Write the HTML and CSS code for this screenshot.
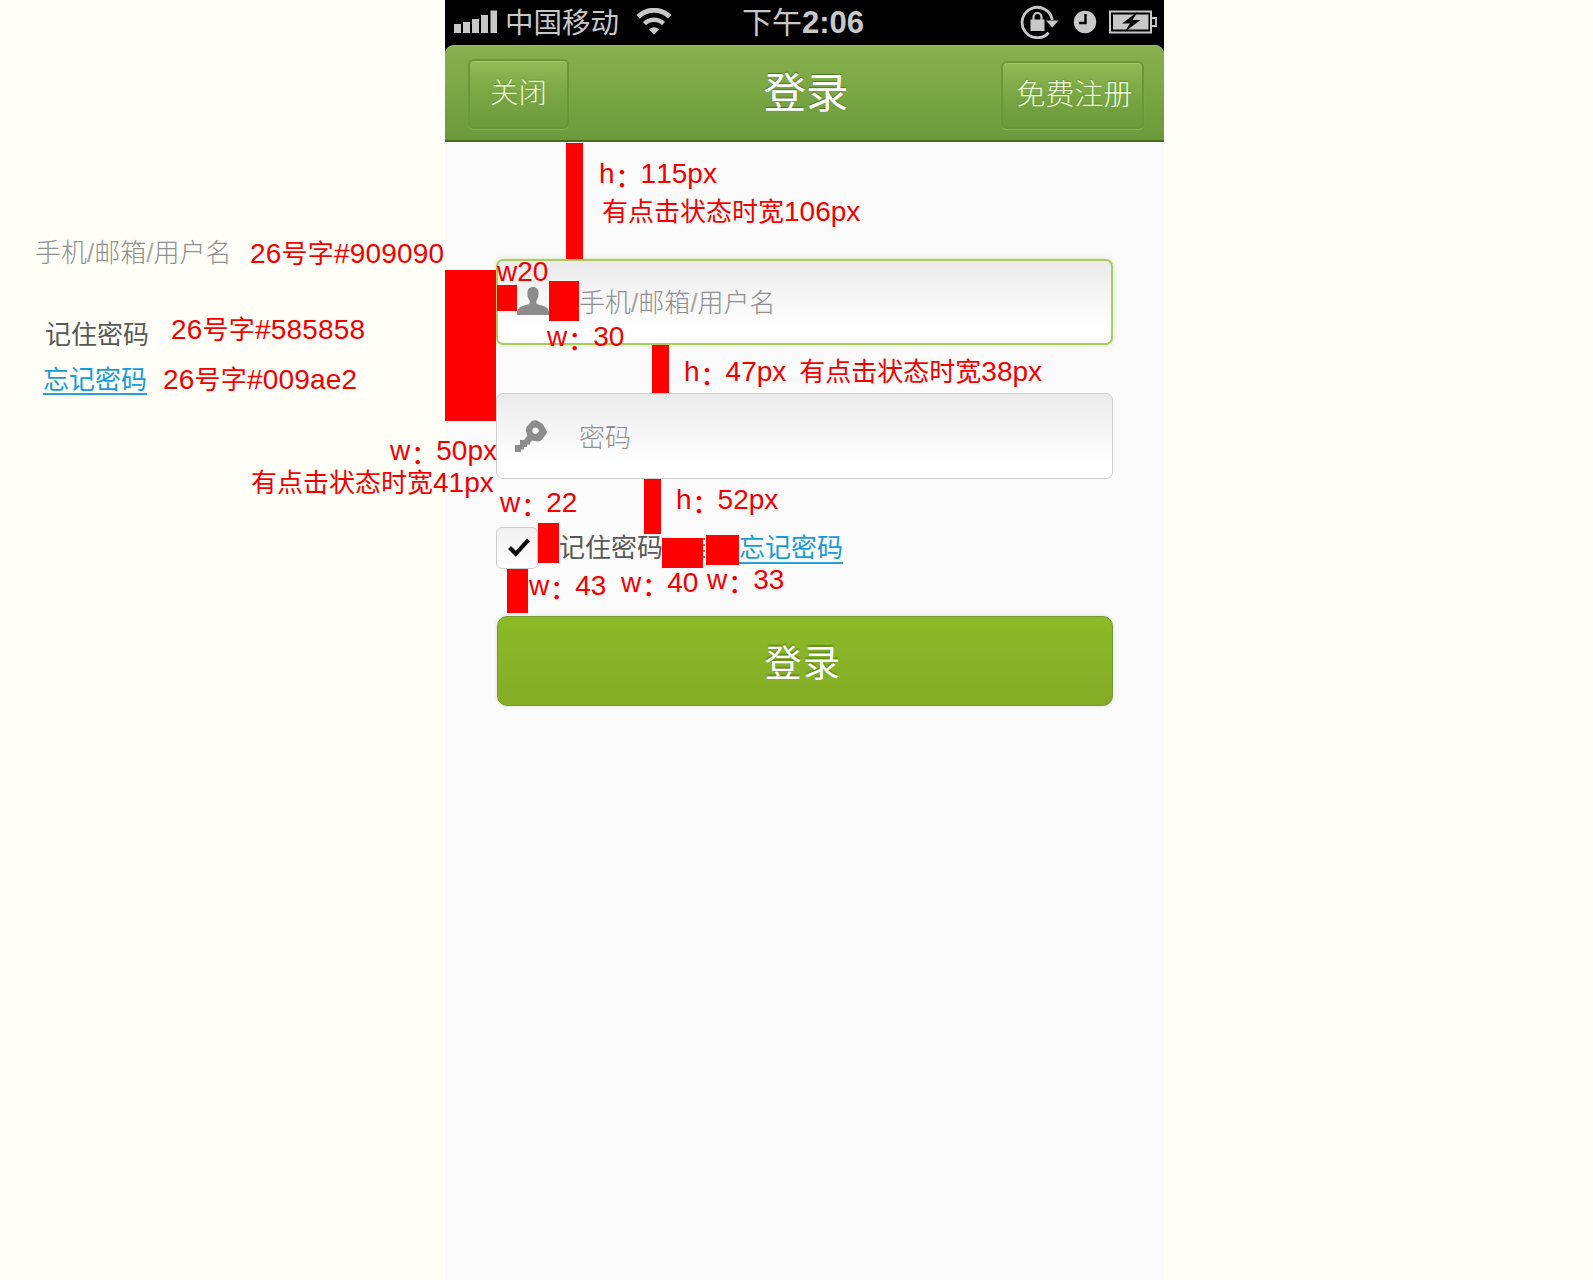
FILE: index.html
```html
<!DOCTYPE html>
<html lang="zh-CN">
<head>
<meta charset="utf-8">
<title>登录</title>
<link rel="stylesheet" href="styles.css">
</head>
<body>
<div class="board">
  <aside class="legend">
    <div class="legend-row row-hint">
      <span class="sample sample-hint">手机<i class="slash">/</i>邮箱<i class="slash">/</i>用户名</span>
      <span class="spec">26<i>号字</i>#909090</span>
    </div>
    <div class="legend-row row-label">
      <span class="sample sample-label">记住密码</span>
      <span class="spec">26<i>号字</i>#585858</span>
    </div>
    <div class="legend-row row-link">
      <span class="sample sample-link">忘记密码</span>
      <span class="spec">26<i>号字</i>#009ae2</span>
    </div>
  </aside>

  <main class="phone">
    <div class="status">
      <div class="status-left">
        <svg class="signal" width="44" height="24" viewBox="0 0 44 24"><path d="M0 14h7v9H0zM9 12h7v11H9zM18 9h7v14h-7zM27 5h7v18h-7zM36.500 0.500h6.500V23h-6.500z"/></svg>
        <span class="carrier">中国移动</span>
        <svg class="wifi" width="36" height="27" viewBox="0 0 36 27"><path d="M2.200 8.800a22.500 22.500 0 0 1 31.600 0" fill="none" stroke="#c8c8c8" stroke-width="5"/><path d="M8.500 15.700a13.600 13.600 0 0 1 19 0" fill="none" stroke="#c8c8c8" stroke-width="4.500"/><path d="M18 26.500l-5-5q5-4.600 10 0z"/></svg>
      </div>
      <div class="clock-text">下午<b>2:06</b></div>
      <div class="status-right">
        <svg width="39" height="35" viewBox="0 0 39 35"><path d="M28.600 28.700A15.200 15.200 0 1 1 32.300 16" fill="none" stroke="#c8c8c8" stroke-width="2.800"/><path d="M26 16.500h12.500l-6.300 7z"/><path d="M10.500 15.500h14V27h-14z"/><path d="M13.500 16v-3a4 4 0 0 1 8 0v3" fill="none" stroke="#c8c8c8" stroke-width="2.200"/></svg>
        <svg class="alarm" width="24" height="24" viewBox="0 0 24 24"><circle cx="12" cy="12" r="11.200"/><path d="M12.500 4v9H6" fill="none" stroke="#000" stroke-width="2.400"/></svg>
        <svg class="battery" width="48" height="24" viewBox="0 0 48 24"><path d="M1 1.500h41v21H1z" fill="none" stroke="#c8c8c8" stroke-width="2"/><path d="M43 8h4v8h-4" fill="none" stroke="#c8c8c8" stroke-width="1.800"/><path d="M4 4.500h35.500v15H4z"/><path d="M29 1.500L13 13.500h8L15.500 22 31.500 10h-8z" fill="#000"/></svg>
      </div>
    </div>

    <header class="navbar">
      <button class="nav-btn close">关闭</button>
      <h1>登录</h1>
      <button class="nav-btn register">免费注册</button>
    </header>

    <form class="form">
      <div class="field field-active">
        <svg width="32" height="28" viewBox="0 0 32 28"><path d="M16 0c3.700 0 5.600 2.300 5.600 6 0 3.400-.8 6-2.300 7.700v2c0 1.300 2 1.800 4.700 2.600 4.500 1.400 8 3 8 7.200V28H0v-2.500c0-4.200 3.500-5.800 8-7.200 2.700-.8 4.700-1.300 4.700-2.600v-2C11.200 12 10.400 9.400 10.400 6 10.400 2.300 12.300 0 16 0z"/></svg>
        <span class="hint">手机<i class="slash">/</i>邮箱<i class="slash">/</i>用户名</span>
      </div>
      <div class="field field-password">
        <svg width="33" height="32" viewBox="0 0 33 32"><path fill-rule="evenodd" d="M17 .8Q19.500-.4 22 .6L27 3.500Q28.800 5 29.500 7L32 11.500Q32 13.500 30.500 15L26.500 20Q25 21.500 22.500 21.500L17.500 20.500 15 22.500V24.500H12V27H9V29.500H6V32H0V25H5V20H9L12.500 15.500 11 11.500Q10.500 9 11.500 7zM20.500 7.500a3.200 3.200 0 1 0 .01 0z"/></svg>
        <span class="hint">密码</span>
      </div>
      <div class="options">
        <span class="checkbox"><svg width="22" height="19" viewBox="0 0 22 19"><path d="M1.500 9.500L7.800 15.800 20.500 1.800" fill="none" stroke="#0a0a0a" stroke-width="4.200"/></svg></span>
        <span class="remember">记住密码</span>
        <span class="divider"></span>
        <a class="forgot">忘记密码</a>
      </div>
      <button class="submit">登录</button>
    </form>
  </main>

  <div class="bar bar-top"></div>
  <div class="bar bar-side"></div>
  <div class="bar bar-icon-left"></div>
  <div class="bar bar-icon-right"></div>
  <div class="bar bar-fields"></div>
  <div class="bar bar-options"></div>
  <div class="bar bar-check"></div>
  <div class="bar bar-divider-left"></div>
  <div class="bar bar-divider-right"></div>
  <div class="bar bar-submit"></div>

  <div class="note note-top">h<i class="colon">：</i>115px</div>
  <div class="note note-top-active"><i>有点击状态时宽</i>106px</div>
  <div class="note note-icon-left">w20</div>
  <div class="note note-icon-right">w<i class="colon">：</i>30</div>
  <div class="note note-fields">h<i class="colon">：</i>47px<i class="gap">有点击状态时宽</i>38px</div>
  <div class="note note-side">w<i class="colon">：</i>50px</div>
  <div class="note note-side-active"><i>有点击状态时宽</i>41px</div>
  <div class="note note-check">w<i class="colon">：</i>22</div>
  <div class="note note-options">h<i class="colon">：</i>52px</div>
  <div class="note note-submit">w<i class="colon">：</i>43</div>
  <div class="note note-divider-left">w<i class="colon">：</i>40</div>
  <div class="note note-divider-right">w<i class="colon">：</i>33</div>
</div>
</body>
</html>
```
FILE: styles.css
```css
* { box-sizing: border-box; }

body {
  margin: 0;
  background: #fffff8;
  font-family: "Noto Sans CJK SC", sans-serif;
}

.board {
  position: relative;
  display: flex;
  height: 1280px;
  overflow: hidden;
}

/* Text colour samples */
.legend { width: 445px; padding-top: 231px; }
.legend-row { display: flex; align-items: flex-start; height: 40px; white-space: nowrap; }
.sample { font-size: 26px; line-height: 40px; }
.sample-hint { width: 215px; color: #909090; font-weight: 300; }
.sample-label { width: 126px; margin-top: 4px; color: #585858; }
.sample-link {
  width: 104px;
  height: 37px;
  margin-right: 16px;
  border-bottom: 2px solid #2a9fda;
  color: #169bd9;
}
.slash {
  font: 26px/20px "Liberation Sans", sans-serif;
  opacity: 0.8;
}
.row-hint { padding-left: 35px; }
.row-hint .spec { margin-top: 3px; }
.row-label { padding-left: 45px; margin-top: 38px; }
.row-label .spec { margin-top: 1px; }
.row-link { padding-left: 43px; margin-top: 9px; }
.row-link .spec { margin-top: 2px; }

.spec, .note {
  color: #f20000;
  font: 28px/40px "Liberation Sans", sans-serif;
  font-kerning: none;
  white-space: nowrap;
}
.spec { letter-spacing: 0.2px; }
.spec i, .note i {
  font: 26px/20px "Noto Sans CJK SC", sans-serif;
}
.note .colon {
  position: relative;
  top: 4px;
  left: 1px;
  font-weight: 500;
}

/* Phone screen */
.phone { width: 719px; background: #fafafa; }

.status {
  display: grid;
  grid-template-columns: 1fr auto 1fr;
  height: 61px;
  margin-bottom: -16px;
  padding: 0 7px 18px 9px;
  background: #000;
  color: #c8c8c8;
}
.status svg { fill: #c8c8c8; }
.status-left { display: flex; align-items: center; }
.carrier { margin: -2px 0 0 7px; font-size: 28.500px; line-height: 40px; }
.wifi { margin-left: 17px; }
.clock-text { padding-right: 5px; font-size: 30px; line-height: 40px; }
.clock-text b { font: bold 31px/30px "Liberation Sans", sans-serif; }
.status-right { display: flex; align-items: center; justify-content: flex-end; }
.alarm { margin-left: 14px; }
.battery { margin-left: 12px; }

.navbar {
  display: flex;
  align-items: flex-start;
  justify-content: space-between;
  height: 97px;
  padding: 14px 20px 0 23px;
  border-bottom: 2px solid #456b22;
  border-radius: 9px 9px 0 0;
  background: linear-gradient(#87b04e, #7aa744 50%, #6c993a);
  box-shadow: inset 0 1px #9abd68;
}
.navbar h1 {
  margin: -3px 0 0;
  padding-left: 42px;
  color: #fff;
  font-size: 42.500px;
  font-weight: 400;
  line-height: 68px;
  text-shadow: 0 -1px 1px #4d7427;
}
.nav-btn {
  height: 70px;
  padding: 0;
  border: 2px solid #699639;
  border-radius: 6px;
  background: linear-gradient(#90bb54, #7aa744 50%, #6d9a3b);
  box-shadow: 0 1px 1px #8bb25a, inset 0 1px #a3c873;
  color: #eeffda;
  font-family: inherit;
  font-weight: 300;
  text-shadow: 0 -1px 1px #648e38;
}
.close { width: 101px; padding-bottom: 7px; font-size: 28.500px; }
.register { width: 143px; height: 68px; margin-top: 2px; padding: 0 0 6px 4px; font-size: 29px; }

.form { display: flex; flex-direction: column; padding: 117px 51px 0; }
.field {
  display: flex;
  align-items: center;
  height: 86px;
  border: 1px solid #cecece;
  border-radius: 7px;
  background: linear-gradient(#ebebeb, #f7f7f7 50%, #fff 80%);
  color: #909090;
  font-size: 26px;
  font-weight: 300;
}
.field svg { fill: #8c8c8c; }
.field-active {
  padding: 0 0 3px 20px;
  border: 2px solid #a9cb62;
  box-shadow: 0 0 5px #d5e8b0;
}
.field-active svg { margin: 0 30px 0 -1px; }
.field-password { margin-top: 48px; padding: 0 0 0 18px; }
.field-password .hint { margin-left: 31px; }
.hint { line-height: 40px; }

.options { display: flex; align-items: center; height: 42px; margin-top: 48px; font-size: 26px; line-height: 36px; }
.checkbox {
  display: flex;
  align-items: center;
  justify-content: center;
  width: 42px;
  height: 42px;
  padding: 0 0 2px 3px;
  border: 1px solid #ccc;
  border-radius: 6px;
  background: linear-gradient(#f0f0f0, #fff);
}
.remember { margin: -4px 0 0 21px; color: #585858; }
.divider { width: 3px; height: 20px; margin: 0 34px 0 39px; background: repeating-linear-gradient(#777 0 2px, transparent 2px 6px); }
.forgot { height: 36px; margin-top: -4px; border-bottom: 2px solid #2a9fda; color: #169bd9; }

.submit {
  height: 90px;
  margin: 47px 0 0 1px;
  padding: 0 4px 0 0;
  border: 1px solid #729a2b;
  border-radius: 10px;
  background: linear-gradient(#8cba28, #84ac26);
  box-shadow: 0 0 4px #ddd;
  color: #fff;
  font: 400 37px/56px "Noto Sans CJK SC", sans-serif;
  letter-spacing: 1.500px;
  text-shadow: 0 -2px 1px #668c22;
}

/* Measurement marks laid over the screen */
.bar, .note { position: absolute; }
.bar { background: #f00; }
.bar-top { left: 566px; top: 143px; width: 17px; height: 116px; }
.bar-side { left: 445px; top: 270px; width: 51px; height: 151px; }
.bar-icon-left { left: 497px; top: 285px; width: 20px; height: 26px; }
.bar-icon-right { left: 549px; top: 281px; width: 30px; height: 40px; }
.bar-fields { left: 652px; top: 345px; width: 17px; height: 48px; }
.bar-options { left: 644px; top: 479px; width: 17px; height: 55px; }
.bar-check { left: 538px; top: 523px; width: 21px; height: 40px; }
.bar-divider-left { left: 662px; top: 538px; width: 41px; height: 30px; }
.bar-divider-right { left: 706px; top: 535px; width: 33px; height: 30px; }
.bar-submit { left: 507px; top: 569px; width: 21px; height: 44px; }

.note-top { left: 599px; top: 154px; }
.note-top-active { left: 602px; top: 192px; }
.note-icon-left { left: 497px; top: 252px; }
.note-icon-right { left: 547px; top: 317px; }
.note-fields { left: 684px; top: 352px; }
.note-fields .gap { margin-left: 13px; }
.note-side { left: 390px; top: 431px; }
.note-side-active { left: 251px; top: 463px; }
.note-check { left: 500px; top: 483px; }
.note-options { left: 676px; top: 480px; }
.note-submit { left: 529px; top: 566px; }
.note-divider-left { left: 621px; top: 563px; }
.note-divider-right { left: 707px; top: 560px; }
```
